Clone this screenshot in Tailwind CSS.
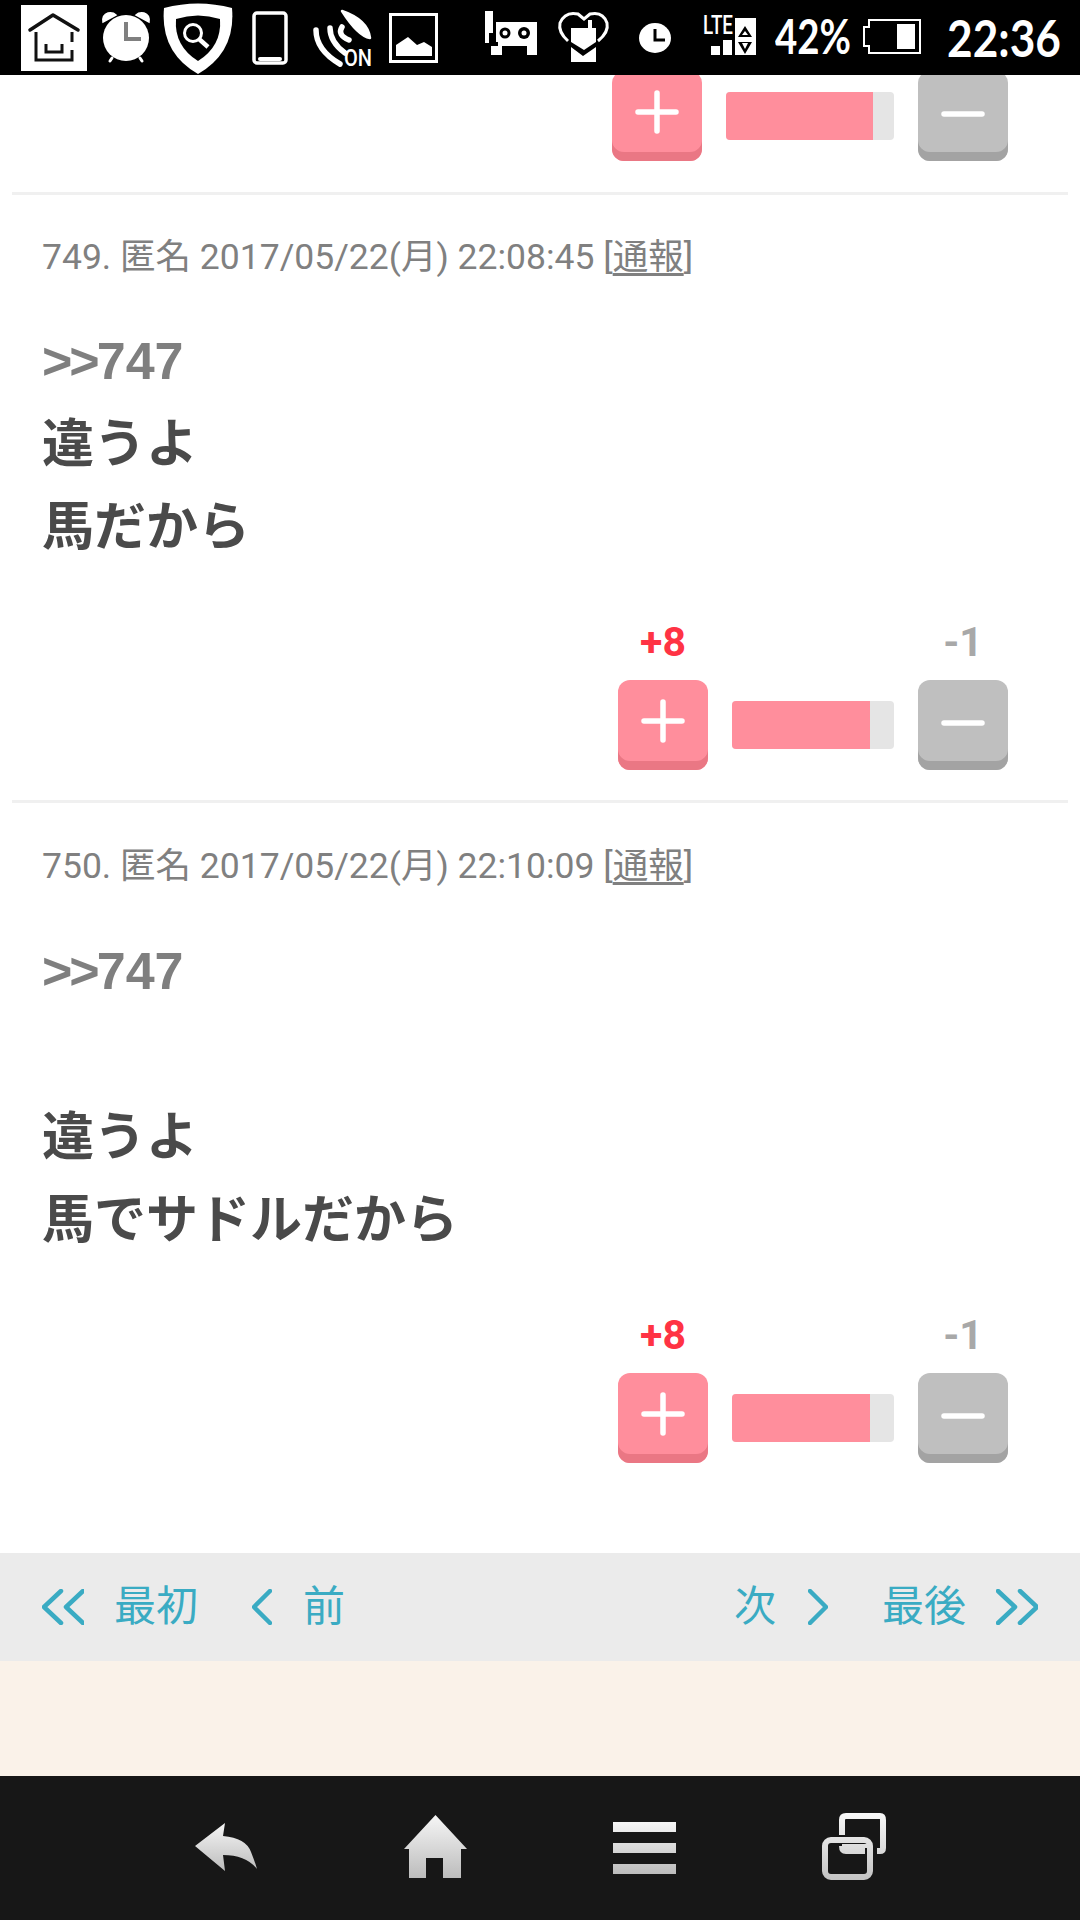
<!DOCTYPE html>
<html lang="ja">
<head>
<meta charset="utf-8">
<script src="https://cdn.jsdelivr.net/npm/@tailwindcss/browser@4"></script>
</head>
<body class="bg-white font-['Roboto','Noto_Sans_CJK_JP',sans-serif]">
<div class="w-[1080px] h-[1920px] overflow-hidden flex flex-col">

  <!-- status bar -->
  <div class="h-[75px] shrink-0 bg-black flex items-start text-white relative z-10">
    <svg class="w-[760px] h-[75px] shrink-0" viewBox="0 0 760 75" fill="none">
      <!-- home box -->
      <rect x="21" y="5" width="66" height="66" fill="#fff"/>
      <path d="M30 30 L53 15 L78 30" stroke="#111" stroke-width="3.5" stroke-linecap="round" stroke-linejoin="round"/>
      <path d="M36 32 V60 H72 V50 M72 42 V32" stroke="#111" stroke-width="3"/>
      <path d="M46 44 V52 H62 V44" stroke="#111" stroke-width="3"/>
      <!-- alarm -->
      <ellipse cx="126" cy="38" rx="23" ry="23" fill="#fff"/>
      <path d="M103 22 Q102 15 108 13 Q113 12 116 15 Z M149 22 Q150 15 144 13 Q139 12 136 15 Z" fill="#fff" stroke="#fff" stroke-width="1.5"/>
      <path d="M112 58 L110 61 M140 58 L142 61" stroke="#fff" stroke-width="3" stroke-linecap="round"/>
      <path d="M126 22 V39 H141" stroke="#808080" stroke-width="4"/>
      <!-- shield -->
      <path d="M164 8 Q198 -1 232 8 Q236 52 198 74 Q160 52 164 8 Z" fill="#fff"/>
      <path d="M176 19 Q198 12 220 19 Q222 46 198 61 Q174 46 176 19 Z" fill="#000"/>
      <circle cx="193" cy="33" r="8.500" stroke="#fff" stroke-width="3"/>
      <path d="M199 39 L208 47" stroke="#fff" stroke-width="4.500"/>
      <!-- phone -->
      <rect x="254" y="13" width="32" height="50" rx="3" stroke="#fff" stroke-width="3.500"/>
      <rect x="258" y="57" width="24" height="4" rx="2" fill="#fff"/>
      <!-- nfc -->
      <path d="M342 11 Q368 20 370 38 Q358 36 342 11 Z" fill="#fff" stroke="#fff" stroke-width="2.500" stroke-linejoin="round"/>
      <path d="M342 27 Q337 35 349 40 M330 28 Q330 42 345 53 M316 30 Q316 50 340 64" stroke="#fff" stroke-width="5.500" stroke-linecap="round"/>
      <text x="344" y="66" fill="#fff" font-family="Roboto" font-weight="500" font-size="24" textLength="28" lengthAdjust="spacingAndGlyphs">ON</text>
      <!-- picture -->
      <rect x="390.500" y="14.500" width="46" height="47" stroke="#fff" stroke-width="3"/>
      <path d="M396 56 V45 L408 37 L417 45 L424 42 L432 47 V56 Z" fill="#fff"/>
      <!-- robot -->
      <path d="M485 11 H493 V33 H489 V43 H485 Z" fill="#fff"/>
      <path d="M496 22 H537 V55 H527 V46 H502 V55 H491 V46 H498 V42 H496 Z" fill="#fff"/>
      <circle cx="505" cy="33" r="5.500" fill="#000"/><circle cx="505" cy="33" r="2.500" fill="#fff"/>
      <circle cx="524" cy="33" r="6" fill="#000"/><circle cx="524" cy="33" r="2.500" fill="#fff"/>
      <!-- heart -->
      <path d="M568 41 Q558 32 560 23 Q565 11 578 14 L584 19 L590 14 Q603 11 607 23 Q609 32 598 41" stroke="#fff" stroke-width="3"/>
      <path d="M571 28 H588 V20 H592 V28 H596 V42 L584 50 L571 42 Z" fill="#fff"/>
      <path d="M571 47 L583 56 L596 47 V62 H571 Z" fill="#fff"/>
      <!-- clock -->
      <ellipse cx="655" cy="38" rx="16" ry="15" fill="#fff"/>
      <path d="M655 29 V40 H665" stroke="#000" stroke-width="3"/>
      <!-- LTE + signal -->
      <text x="703" y="34" fill="#fff" font-family="Roboto" font-weight="500" font-size="26" textLength="30" lengthAdjust="spacingAndGlyphs">LTE</text>
      <rect x="711" y="46" width="9" height="9" fill="#fff"/>
      <rect x="723" y="40" width="9" height="15" fill="#fff"/>
      <rect x="735" y="18" width="21" height="37" fill="#fff"/>
      <path d="M745 26 L738 37 H752 Z M745 54 L738 42 H752 Z" fill="#000"/>
      <path d="M745 31 L742 35 H748 Z M745 49 L742 43 H748 Z" fill="#fff"/>
    </svg>
    <span class="absolute left-[775px] top-[9px] text-[48px] leading-[54px] font-bold font-['Lato'] origin-left scale-x-[.8]">42%</span>
    <svg class="absolute left-[860px] top-0 w-[64px] h-[75px]" viewBox="860 0 64 75" fill="none">
      <path d="M869 20 H920 V53 H869 V46 H864 V27 H869 Z" stroke="#fff" stroke-width="2"/>
      <rect x="897" y="24" width="18" height="25" fill="#fff"/>
    </svg>
    <span class="absolute left-[947px] top-[8px] text-[52px] leading-[58px] font-bold font-['Lato'] origin-left scale-x-[.85]">22:36</span>
  </div>

  <!-- tail of post 748 -->
  <div class="h-[117px] shrink-0 overflow-hidden flex items-start justify-end gap-6 pr-[72px]">
    <div class="w-[90px] h-[90px] -mt-[4px] rounded-xl bg-[#ff8e9c] shadow-[inset_0_-9px_0_#ea7784] flex items-center justify-center pb-[9px]">
      <svg class="w-[44px] h-[44px]" viewBox="0 0 44 44"><path d="M22 3 V41 M3 22 H41" stroke="#fff" stroke-width="5.500" stroke-linecap="round"/></svg>
    </div>
    <div class="w-[168px] h-[48px] mt-[17px] rounded-[4px] overflow-hidden bg-[#e5e5e5]"><div class="h-full w-[147px] bg-[#ff8e9c]"></div></div>
    <div class="w-[90px] h-[90px] -mt-[4px] rounded-xl bg-[#bfbfbf] shadow-[inset_0_-9px_0_#a3a3a3] flex items-center justify-center pb-[9px]">
      <svg class="w-[44px] h-[44px]" viewBox="0 0 44 44"><path d="M3 24 H41" stroke="#fff" stroke-width="5.500" stroke-linecap="round"/></svg>
    </div>
  </div>

  <!-- post 749 -->
  <div class="mx-3 h-[3px] shrink-0 bg-[#f0f0f0]"></div>
  <div class="shrink-0 h-[605px]">
    <p class="pt-[42px] pl-[42px] h-[81px] text-[35.500px] leading-[40px] text-[#808080] whitespace-nowrap">749. 匿名 2017/05/22(月) 22:08:45 [<span class="underline underline-offset-4">通報</span>]</p>
    <div class="mt-[44px] pl-[42px] text-[52px] leading-[83px] font-bold text-[#4a4a4a]">
      <p class="text-[#7f7f7f] font-['Liberation_Sans','Noto_Sans_CJK_JP',sans-serif]"><span class="tracking-[-3px]">&gt;&gt;</span>747</p>
      <p>違うよ</p>
      <p>馬だから</p>
    </div>
    <div class="mt-[51px] flex items-end justify-end gap-6 pr-[72px]">
      <div class="w-[90px] flex flex-col items-center">
        <span class="h-[44px] mb-4 text-[41px] leading-[44px] font-bold text-[#ff3344]">+8</span>
        <div class="w-[90px] h-[90px] rounded-xl bg-[#ff8e9c] shadow-[inset_0_-9px_0_#ea7784] flex items-center justify-center pb-[9px]">
          <svg class="w-[44px] h-[44px]" viewBox="0 0 44 44"><path d="M22 3 V41 M3 22 H41" stroke="#fff" stroke-width="5.500" stroke-linecap="round"/></svg>
        </div>
      </div>
      <div class="w-[162px] h-[48px] mb-[21px] rounded-[4px] overflow-hidden bg-[#e5e5e5]"><div class="h-full w-[138px] bg-[#ff8e9c]"></div></div>
      <div class="w-[90px] flex flex-col items-center">
        <span class="h-[44px] mb-4 text-[41px] leading-[44px] font-bold text-[#a8a8a8]">-1</span>
        <div class="w-[90px] h-[90px] rounded-xl bg-[#bfbfbf] shadow-[inset_0_-9px_0_#a3a3a3] flex items-center justify-center pb-[9px]">
          <svg class="w-[44px] h-[44px]" viewBox="0 0 44 44"><path d="M3 24 H41" stroke="#fff" stroke-width="5.500" stroke-linecap="round"/></svg>
        </div>
      </div>
    </div>
  </div>

  <!-- post 750 -->
  <div class="mx-3 h-[3px] shrink-0 bg-[#f0f0f0]"></div>
  <div class="shrink-0 h-[750px]">
    <p class="pt-[43px] pl-[42px] h-[83px] text-[35.500px] leading-[40px] text-[#808080] whitespace-nowrap">750. 匿名 2017/05/22(月) 22:10:09 [<span class="underline underline-offset-4">通報</span>]</p>
    <div class="mt-[44px] pl-[42px] text-[52px] leading-[83px] font-bold text-[#4a4a4a]">
      <p class="text-[#7f7f7f] font-['Liberation_Sans','Noto_Sans_CJK_JP',sans-serif]"><span class="tracking-[-3px]">&gt;&gt;</span>747</p>
      <p class="h-[83px]"></p>
      <p>違うよ</p>
      <p>馬でサドルだから</p>
    </div>
    <div class="mt-[51px] flex items-end justify-end gap-6 pr-[72px]">
      <div class="w-[90px] flex flex-col items-center">
        <span class="h-[44px] mb-4 text-[41px] leading-[44px] font-bold text-[#ff3344]">+8</span>
        <div class="w-[90px] h-[90px] rounded-xl bg-[#ff8e9c] shadow-[inset_0_-9px_0_#ea7784] flex items-center justify-center pb-[9px]">
          <svg class="w-[44px] h-[44px]" viewBox="0 0 44 44"><path d="M22 3 V41 M3 22 H41" stroke="#fff" stroke-width="5.500" stroke-linecap="round"/></svg>
        </div>
      </div>
      <div class="w-[162px] h-[48px] mb-[21px] rounded-[4px] overflow-hidden bg-[#e5e5e5]"><div class="h-full w-[138px] bg-[#ff8e9c]"></div></div>
      <div class="w-[90px] flex flex-col items-center">
        <span class="h-[44px] mb-4 text-[41px] leading-[44px] font-bold text-[#a8a8a8]">-1</span>
        <div class="w-[90px] h-[90px] rounded-xl bg-[#bfbfbf] shadow-[inset_0_-9px_0_#a3a3a3] flex items-center justify-center pb-[9px]">
          <svg class="w-[44px] h-[44px]" viewBox="0 0 44 44"><path d="M3 24 H41" stroke="#fff" stroke-width="5.500" stroke-linecap="round"/></svg>
        </div>
      </div>
    </div>
  </div>

  <!-- pager -->
  <div class="h-[108px] shrink-0 bg-[#ebebeb] flex items-center justify-between pl-[42px] pr-[42px] text-[42px] leading-[48px] text-[#3aabc3]">
    <div class="flex items-center">
      <svg class="w-[42px] h-[36px] mr-[30px]" viewBox="0 0 42 36" fill="none"><path d="M19 2 L2 18 L19 34 M41 2 L24 18 L41 34" stroke="#3aabc3" stroke-width="4.500" stroke-linecap="round" stroke-linejoin="round"/></svg>
      <span>最初</span>
      <svg class="w-[20px] h-[36px] ml-[54px] mr-[31px]" viewBox="0 0 20 36" fill="none"><path d="M18 2 L2 18 L18 34" stroke="#3aabc3" stroke-width="4.500" stroke-linecap="round" stroke-linejoin="round"/></svg>
      <span>前</span>
    </div>
    <div class="flex items-center">
      <span>次</span>
      <svg class="w-[20px] h-[36px] ml-[32px] mr-[54px]" viewBox="0 0 20 36" fill="none"><path d="M2 2 L18 18 L2 34" stroke="#3aabc3" stroke-width="4.500" stroke-linecap="round" stroke-linejoin="round"/></svg>
      <span>最後</span>
      <svg class="w-[42px] h-[36px] ml-[30px]" viewBox="0 0 42 36" fill="none"><path d="M2 2 L19 18 L2 34 M24 2 L41 18 L24 34" stroke="#3aabc3" stroke-width="4.500" stroke-linecap="round" stroke-linejoin="round"/></svg>
    </div>
  </div>
  <div class="h-[115px] shrink-0 bg-[#faf2e9]"></div>

  <!-- nav bar -->
  <div class="h-[144px] shrink-0 bg-[#171717]">
    <svg class="w-[1080px] h-[144px]" viewBox="0 1776 1080 144" fill="none">
      <defs>
        <linearGradient id="g" x1="0" y1="0" x2="0" y2="1"><stop offset="0" stop-color="#f6f6f6"/><stop offset="1" stop-color="#bcbcbc"/></linearGradient>
        <linearGradient id="m" gradientUnits="userSpaceOnUse" x1="0" y1="1822" x2="0" y2="1874"><stop offset="0" stop-color="#f6f6f6"/><stop offset="1" stop-color="#bcbcbc"/></linearGradient>
        <linearGradient id="r" gradientUnits="userSpaceOnUse" x1="0" y1="1813" x2="0" y2="1879"><stop offset="0" stop-color="#f8f8f8"/><stop offset="1" stop-color="#c4c4c4"/></linearGradient>
      </defs>
      <path d="M195 1846 L225 1823 L223 1836 Q246 1838 251 1852 Q255 1862 257 1869 Q246 1855 223 1855 L225 1871 Z" fill="url(#g)"/>
      <path d="M435.500 1815 L467 1849 H461 V1878 H443 V1858 H426 V1878 H409 V1849 H404 Z" fill="url(#g)"/>
      <path d="M613 1822 H676 V1832 H613 Z M613 1843 H676 V1853 H613 Z M613 1864 H676 V1874 H613 Z" fill="url(#m)"/>
      <path d="M842 1835 V1820 Q842 1816 846 1816 H880 Q883 1816 883 1820 V1848 Q883 1851 880 1851 H877 M842 1846 Q842 1851 846 1851 H865" stroke="url(#r)" stroke-width="6"/>
      <rect x="825" y="1840" width="45" height="37" rx="6" stroke="url(#r)" stroke-width="6"/>
      <path d="M842 1846 H868" stroke="url(#r)" stroke-width="4"/>
    </svg>
  </div>
</div>
</body>
</html>
